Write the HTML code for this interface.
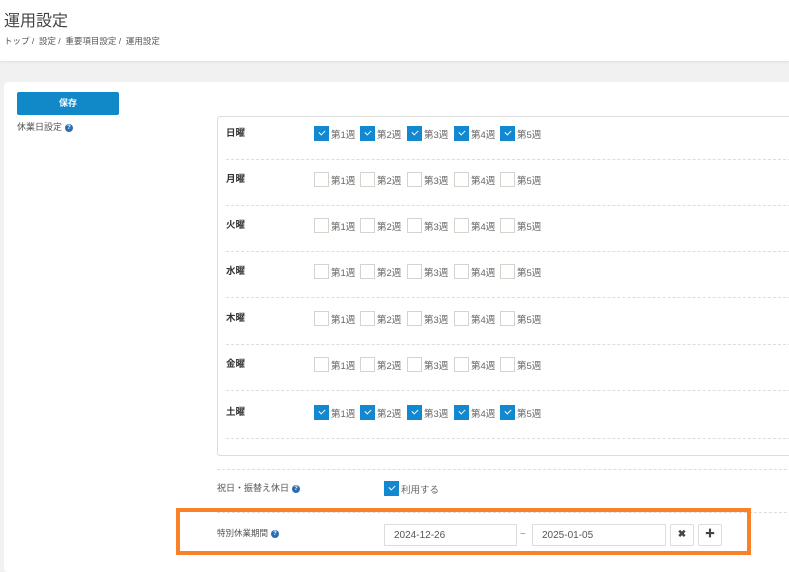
<!DOCTYPE html>
<html><head><meta charset="utf-8"><style>
*{box-sizing:border-box;margin:0;padding:0}
body{width:789px;height:557px;overflow:hidden;background:#f1f1f1;font-family:"Liberation Sans","Noto Sans CJK JP",sans-serif;color:#555;position:relative}
.a{position:absolute;white-space:nowrap}
.hdr{position:absolute;left:0;top:0;width:789px;height:61px;background:#fff;box-shadow:0 1px 2px #ddd}
.card{position:absolute;left:4px;top:82px;width:800px;height:490px;background:#fff;border-radius:4px}
.cb{position:absolute;width:15px;height:15px;border:1px solid #d6d2cc;background:#fff}
.cb.on{background:#1188d0;border-color:#1188d0}
.cb.on:after{content:"";position:absolute;left:4px;top:3px;width:5px;height:3px;border-left:1.5px solid #fff;border-bottom:1.5px solid #fff;transform:rotate(-45deg)}
.lb{position:absolute;font-size:9.5px;color:#666}
.day{position:absolute;left:226px;font-size:9.5px;font-weight:bold;color:#333}
.dash{position:absolute;left:226px;width:570px;border-top:1px dashed #ddd}
.q{display:inline-block;width:8px;height:8px;border-radius:50%;background:#2a6eb0;color:#fff;font-size:6px;line-height:8px;text-align:center;font-weight:bold;vertical-align:1px;margin-left:3px}
.inp{position:absolute;top:524px;height:22px;border:1px solid #ddd;font-size:10px;color:#555;padding:5px 0 0 9px;background:#fff}
.btn{position:absolute;top:524px;width:24px;height:22px;border:1px solid #ddd;border-radius:2px;font-size:10px;font-weight:bold;text-align:center;line-height:20px;color:#444;background:#fff}
</style></head><body>
<div class="hdr"></div>
<div class="a" style="left:4px;top:7px;font-size:16px;color:#444">運用設定</div>
<div class="a" style="left:4px;top:35px;font-size:8.5px;color:#555">トップ /&nbsp;&nbsp;設定 /&nbsp;&nbsp;重要項目設定 /&nbsp;&nbsp;運用設定</div>
<div class="card"></div>
<div class="a" style="left:17px;top:92px;width:102px;height:23px;background:#1188c8;border-radius:2px;color:#fff;font-size:9px;font-weight:bold;text-align:center;line-height:23px">保存</div>
<div class="a" style="left:17px;top:120px;font-size:9px;color:#555">休業日設定<span class="q">?</span></div>
<div class="a" style="left:217px;top:116px;width:590px;height:340px;border:1px solid #ddd;border-radius:3px"></div>
<div id="rows"></div>
<div class="a" style="left:217px;top:469px;width:580px;border-top:1px dashed #ddd"></div>
<div class="a" style="left:217px;top:481px;font-size:9px;color:#555">祝日・振替え休日<span class="q">?</span></div>
<div class="cb on" style="left:384px;top:481px"></div>
<div class="lb" style="left:401px;top:482px;font-size:9.5px">利用する</div>
<div class="a" style="left:217px;top:512px;width:580px;border-top:1px dashed #ddd"></div>
<div class="a" style="left:176px;top:508px;width:575px;height:47px;border:4px solid #fb8128"></div>
<div class="a" style="left:217px;top:527px;font-size:8.5px;color:#555">特別休業期間<span class="q">?</span></div>
<div class="inp" style="left:384px;width:133px">2024-12-26</div>
<div class="a" style="left:520px;top:529px;font-size:10px;color:#888">~</div>
<div class="inp" style="left:532px;width:134px">2025-01-05</div>
<div class="btn" style="left:670px">✖</div>
<div class="btn" style="left:698px">✚</div>
<script>
var days=["日曜","月曜","火曜","水曜","木曜","金曜","土曜"],on=[1,0,0,0,0,0,1],tops=[126,172,218,264,311,357,405],xs=[314,360,407,454,500],h="";
for(var i=0;i<7;i++){var t=tops[i];h+='<div class="day" style="top:'+(t-1)+'px">'+days[i]+'</div>';
for(var j=0;j<5;j++){h+='<div class="cb'+(on[i]?' on':'')+'" style="left:'+xs[j]+'px;top:'+t+'px"></div><div class="lb" style="left:'+(xs[j]+17)+'px;top:'+(t+1)+'px">第'+(j+1)+'週</div>';}
h+='<div class="dash" style="top:'+(t+33)+'px"></div>';}
document.getElementById("rows").innerHTML=h;
</script>
</body></html>
